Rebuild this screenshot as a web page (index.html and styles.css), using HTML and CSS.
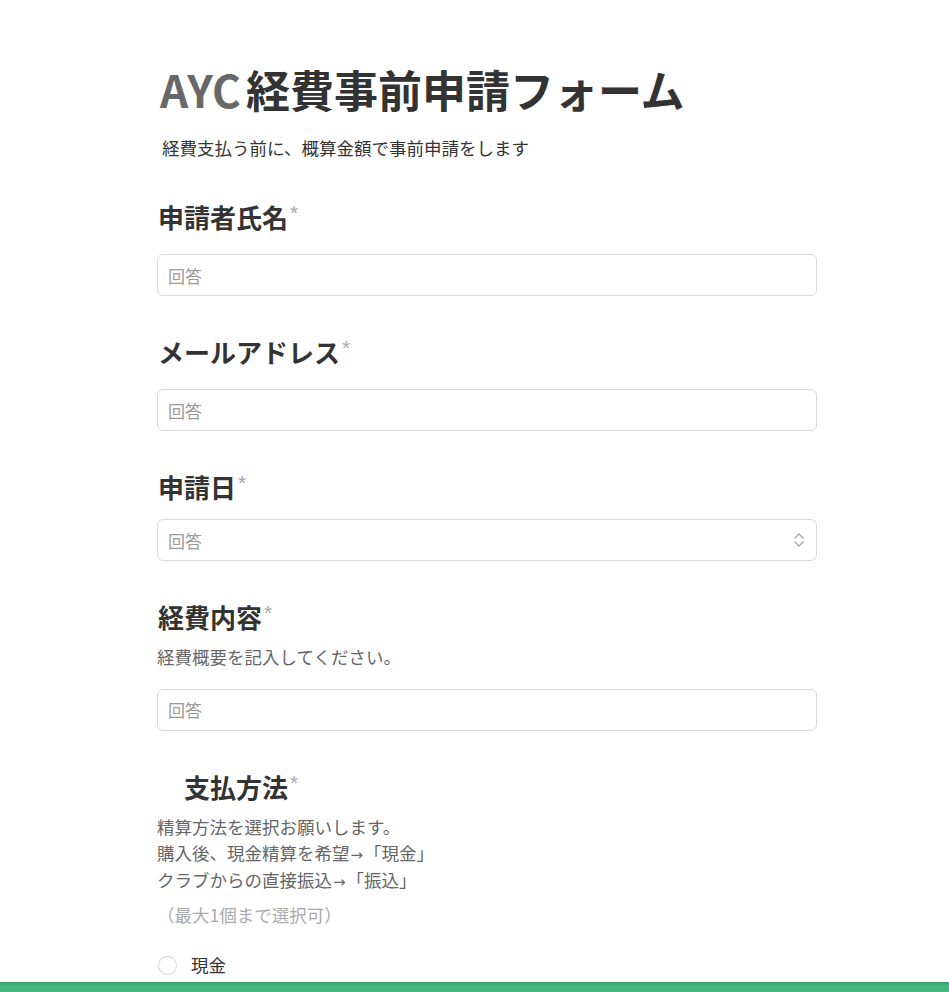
FILE: index.html
```html
<!DOCTYPE html>
<html lang="ja">
<head>
<meta charset="utf-8">
<title>AYC経費事前申請フォーム</title>
<link rel="stylesheet" href="styles.css">
</head>
<body>
<main class="form">
  <h1 class="title"><span class="brand">AYC</span>経費事前申請フォーム</h1>
  <p class="subtitle">経費支払う前に、概算金額で事前申請をします</p>

  <section class="field">
    <h2 class="label">申請者氏名<span class="req">*</span></h2>
    <div class="input"><span class="ph">回答</span></div>
  </section>

  <section class="field">
    <h2 class="label">メールアドレス<span class="req">*</span></h2>
    <div class="input"><span class="ph">回答</span></div>
  </section>

  <section class="field">
    <h2 class="label">申請日<span class="req">*</span></h2>
    <div class="input input-date"><span class="ph">回答</span>
      <svg class="chev" width="12" height="16" viewBox="0 0 12 16" fill="none" stroke="#a8a8a8" stroke-width="1.4" stroke-linecap="round" stroke-linejoin="round"><path d="M2 6 L6 2 L10 6"/><path d="M2 10 L6 14 L10 10"/></svg>
    </div>
  </section>

  <section class="field">
    <h2 class="label">経費内容<span class="req">*</span></h2>
    <p class="desc">経費概要を記入してください。</p>
    <div class="input"><span class="ph">回答</span></div>
  </section>

  <section class="field">
    <h2 class="label label-indent">支払方法<span class="req">*</span></h2>
    <p class="desc">精算方法を選択お願いします。<br>購入後、現金精算を希望<span class="arrow">→</span>「現金」<br>クラブからの直接振込<span class="arrow">→</span>「振込」</p>
    <p class="hint">（最大1個まで選択可）</p>
    <div class="options">
      <label class="option"><span class="radio"></span><span class="opt-text">現金</span></label>
    </div>
  </section>
</main>
<div class="footer-bar"></div>
</body>
</html>
```
FILE: styles.css
```css
* { box-sizing: border-box; }
html, body { margin: 0; padding: 0; background: #fff; }
body {
  font-family: "Noto Sans CJK JP", "Noto Sans", "Liberation Sans", sans-serif;
  color: #333;
}
.form {
  width: 660px;
  margin-left: 157px;
  padding-top: 58px;
  padding-bottom: 10px;
}
.title {
  margin: 0 0 0 3px;
  font-size: 44px;
  line-height: 62px;
  font-weight: 700;
  color: #333;
}
.brand { color: #686868; margin-right: 5px; }
.subtitle {
  margin: 15px 0 0 5px;
  font-size: 17.5px;
  line-height: 25px;
  color: #333;
}
.field { margin-top: 38px; }
.form > .subtitle + .field { margin-top: 39px; }
.label {
  margin: 0 0 0 1px;
  font-size: 26px;
  line-height: 36px;
  font-weight: 700;
  color: #333;
}
.label-indent { margin-left: 27px; }
.req {
  font-family: "Liberation Sans", sans-serif;
  color: #ababab;
  font-size: 21px;
  line-height: 21px;
  font-weight: 400;
  vertical-align: top;
  position: relative;
  top: 3px;
  margin-left: 2px;
}
.desc {
  margin: 9px 0 0;
  font-size: 17.5px;
  line-height: 26.5px;
  color: #666;
}
.arrow {
  font-family: "DejaVu Sans", sans-serif;
  font-size: 15px;
  line-height: 1;
  margin: 0 1px;
}
.hint {
  margin: 9px 0 0;
  font-size: 17.5px;
  line-height: 26px;
  color: #aaa;
}
.input {
  margin-top: 19px;
  height: 42px;
  border: 1px solid #d9d9d9;
  border-radius: 6px;
  display: flex;
  align-items: center;
  padding: 0 10px;
}
.desc + .input { margin-top: 18px; }
.field:nth-of-type(3) .input { margin-top: 14px; }
.ph { font-size: 17px; color: #9a9a9a; }
.input-date { justify-content: space-between; padding-right: 11px; }
.chev { display: block; }
.options { margin-top: 25px; display: flex; flex-direction: column; gap: 20px; }
.option { display: flex; align-items: center; gap: 14px; line-height: 24px; }
.radio {
  width: 19px; height: 19px;
  border: 1.5px solid #d4d4d4;
  border-radius: 50%;
  margin-left: 1px;
}
.opt-text { font-size: 17.5px; color: #333; }
.footer-bar {
  position: fixed;
  left: 0; right: 0; bottom: 0;
  height: 10px;
  background: linear-gradient(#3a9c6c, #45b97e 40%, #42b87b);
}
```
